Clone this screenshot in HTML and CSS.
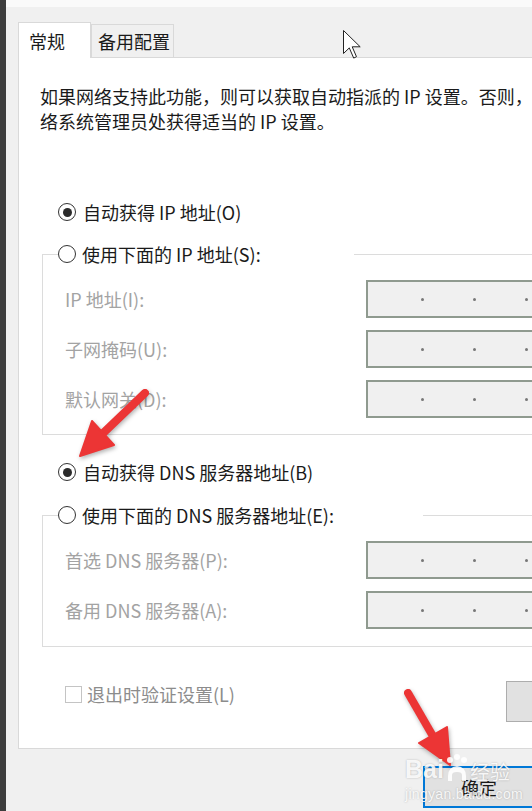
FILE: index.html
```html
<!DOCTYPE html>
<html lang="zh-CN">
<head>
  <meta charset="UTF-8" />
  <meta name="viewport" content="width=device-width, initial-scale=1.0" />
  <title>Internet 协议版本 4 (TCP/IPv4) 属性</title>
  <link rel="stylesheet" href="styles.css">
</head>
<body>

  <div class="screen">
    <div class="side-strip"></div>

    <div class="dialog">
      <div class="tabs">
        <div class="tab active">常规</div>
        <div class="tab">备用配置</div>
      </div>

      <div class="panel">
        <p class="intro">如果网络支持此功能，则可以获取自动指派的 IP 设置。否则，你需要从网<br>络系统管理员处获得适当的 IP 设置。</p>

        <!-- IP 地址 -->
        <div class="radio-row first">
          <span class="radio checked"></span>
          <span>自动获得 IP 地址(O)</span>
        </div>
        <fieldset class="group group-ip">
          <legend>
            <span class="radio"></span>
            <span>使用下面的 IP 地址(S):</span>
          </legend>
          <div class="field-row">
            <span>IP 地址(I):</span>
            <div class="ip-box"><i></i><i></i><i></i></div>
          </div>
          <div class="field-row">
            <span>子网掩码(U):</span>
            <div class="ip-box"><i></i><i></i><i></i></div>
          </div>
          <div class="field-row">
            <span>默认网关(D):</span>
            <div class="ip-box"><i></i><i></i><i></i></div>
          </div>
        </fieldset>

        <!-- DNS -->
        <div class="radio-row dns">
          <span class="radio checked"></span>
          <span>自动获得 DNS 服务器地址(B)</span>
        </div>
        <fieldset class="group group-dns">
          <legend>
            <span class="radio"></span>
            <span>使用下面的 DNS 服务器地址(E):</span>
          </legend>
          <div class="field-row">
            <span>首选 DNS 服务器(P):</span>
            <div class="ip-box"><i></i><i></i><i></i></div>
          </div>
          <div class="field-row">
            <span>备用 DNS 服务器(A):</span>
            <div class="ip-box"><i></i><i></i><i></i></div>
          </div>
        </fieldset>

        <div class="panel-footer">
          <label class="check-row">
            <span class="checkbox"></span>
            <span>退出时验证设置(L)</span>
          </label>
          <button class="btn btn-advanced">高级(V)...</button>
        </div>
      </div>

      <div class="dialog-buttons">
        <button class="btn btn-default">确定</button>
      </div>
    </div>

    <!-- annotations drawn over the screenshot -->
    <svg class="marks" width="532" height="811" viewBox="0 0 532 811">
      <g class="arrow">
        <line x1="145" y1="393" x2="97" y2="439" />
        <polygon points="80,456 92,421 114,445" />
      </g>
      <g class="arrow">
        <line x1="408" y1="693" x2="434" y2="738" />
        <polygon points="450,765 447,727 419,743" />
      </g>
      <path class="cursor" d="M343.5 30.5 v23 l5.8 -5.6 l4.4 10.2 l2.8 -1.4 l-4.3 -9.9 h8 z" />
    </svg>

    <div class="watermark">
      <div class="wm-brand">
        <span>Bai</span>
        <svg class="paw" width="24" height="28" viewBox="0 0 24 28">
          <circle cx="5" cy="6" r="3" />
          <circle cx="12" cy="3" r="3" />
          <circle cx="19" cy="6" r="3" />
          <path d="M3 22 q0 -9 9 -10 q9 1 9 10 v5 h-4 v-6 q0 -3 -5 -3 q-5 0 -5 3 v6 h-4 z" />
        </svg>
        <span class="wm-cn">经验</span>
      </div>
      <div class="wm-url">jingyan.baidu.com</div>
    </div>
  </div>

</body>
</html>
```

FILE: styles.css
```css
* {
  box-sizing: border-box;
}

html, body {
  margin: 0;
  height: 100%;
}

body {
  background: #f0f0f0;
  color: #1a1a1a;
  font-family: "Noto Sans CJK SC", "Microsoft YaHei", sans-serif;
  font-size: 18px;
  overflow: hidden;
}

.screen {
  position: relative;
  display: flex;
  width: 532px;
  height: 811px;
  overflow: hidden;
}

.side-strip {
  flex: none;
  width: 6px;
  background: #3d3d3d;
}

.dialog {
  flex: 1;
  min-width: 0;
  border-top: 7px solid #fafafa;
  padding: 15px 0 0 12px;
}

/* === Tabs === */
.tabs {
  display: flex;
  align-items: flex-end;
  height: 35px;
}

.tab {
  display: flex;
  align-items: center;
  width: 83px;
  height: 33px;
  padding-left: 6px;
  border: 1px solid #d9d9d9;
  border-bottom: none;
  background: #f0f0f0;
  line-height: 1;
  white-space: nowrap;
}

.tab.active {
  position: relative;
  z-index: 1;
  width: 73px;
  height: 36px;
  margin-bottom: -1px;
  padding-left: 10px;
  background: #fff;
}

/* === Panel === */
.panel {
  width: 560px;
  height: 692px;
  padding-top: 26px;
  border: 1px solid #d9d9d9;
  background: #fff;
}

.intro {
  margin: 0 0 0 21px;
  line-height: 25px;
  white-space: nowrap;
}

.radio-row {
  display: flex;
  align-items: center;
  gap: 7px;
  height: 26px;
  margin-left: 39px;
  white-space: nowrap;
}

.radio-row.first {
  margin-top: 65px;
}

.radio-row.dns {
  margin-top: 24px;
}

.radio {
  flex: none;
  display: flex;
  align-items: center;
  justify-content: center;
  width: 18px;
  height: 18px;
  border: 1.5px solid #333;
  border-radius: 50%;
  background: #fff;
}

.radio.checked::after {
  content: "";
  width: 9px;
  height: 9px;
  border-radius: 50%;
  background: #2b2b2b;
}

.group {
  width: 600px;
  min-width: 0;
  margin: 16px 0 0 23px;
  padding: 13px 0 16px 15px;
  border: 1px solid #dcdcdc;
}

.group-dns {
  margin-top: 17px;
  padding-bottom: 17px;
}

.group legend {
  display: flex;
  align-items: center;
  gap: 6px;
  height: 26px;
  padding: 0;
  white-space: nowrap;
}

.group-ip legend {
  width: 296px;
}

.group-dns legend {
  width: 365px;
}

.field-row {
  display: grid;
  grid-template-columns: 301px 220px;
  align-items: center;
  height: 38px;
  padding-left: 7px;
  color: #a3a3a3;
  white-space: nowrap;
}

.field-row + .field-row {
  margin-top: 12px;
}

.ip-box {
  display: flex;
  align-items: center;
  gap: 49px;
  height: 38px;
  padding-left: 53px;
  border: 2px solid #8f9a8f;
  background: #f0f0f0;
}

.ip-box i {
  width: 3px;
  height: 3px;
  border-radius: 50%;
  background: #777;
}

.panel-footer {
  display: grid;
  grid-template-columns: 441px 110px;
  align-items: start;
  margin: 34px 0 0 46px;
}

.check-row {
  display: flex;
  align-items: center;
  gap: 5px;
  height: 26px;
  color: #8c8c8c;
  white-space: nowrap;
}

.checkbox {
  width: 17px;
  height: 17px;
  border: 1px solid #c4c4c4;
  background: #fff;
}

.btn {
  height: 41px;
  border: 1px solid #adadad;
  background: #e1e1e1;
  color: #1a1a1a;
  font: inherit;
  white-space: nowrap;
}

.btn-advanced {
  padding-left: 30px;
  text-align: left;
}

/* === Dialog buttons === */
.dialog-buttons {
  display: flex;
  margin-top: 17px;
  padding-left: 405px;
}

.btn-default {
  flex: none;
  width: 112px;
  height: 42px;
  border: 2px solid #0078d7;
}

/* === Annotations === */
.marks {
  position: absolute;
  top: 0;
  left: 0;
  pointer-events: none;
}

.arrow {
  fill: #ec3535;
  stroke: #ec3535;
  filter: drop-shadow(1px 2px 2px rgba(0, 0, 0, 0.3));
}

.arrow line {
  stroke-width: 8;
  stroke-linecap: round;
}

.arrow polygon {
  stroke-width: 2;
  stroke-linejoin: round;
}

.cursor {
  fill: #fff;
  stroke: #222;
  stroke-width: 1;
  stroke-linejoin: miter;
}

.watermark {
  position: absolute;
  top: 754px;
  left: 405px;
  color: rgba(255, 255, 255, 0.88);
  font-family: "Liberation Sans", Arial, sans-serif;
  text-shadow: 0 0 2px rgba(0, 0, 0, 0.25);
  pointer-events: none;
}

.wm-brand {
  display: flex;
  align-items: flex-end;
  gap: 1px;
  font-size: 25px;
  font-weight: bold;
  line-height: 1;
}

.paw {
  fill: rgba(255, 255, 255, 0.88);
}

.wm-cn {
  font-family: "Noto Sans CJK SC", sans-serif;
  font-size: 20px;
  font-weight: normal;
}

.wm-url {
  margin-top: 4px;
  font-size: 14px;
  letter-spacing: 0.3px;
}
```
